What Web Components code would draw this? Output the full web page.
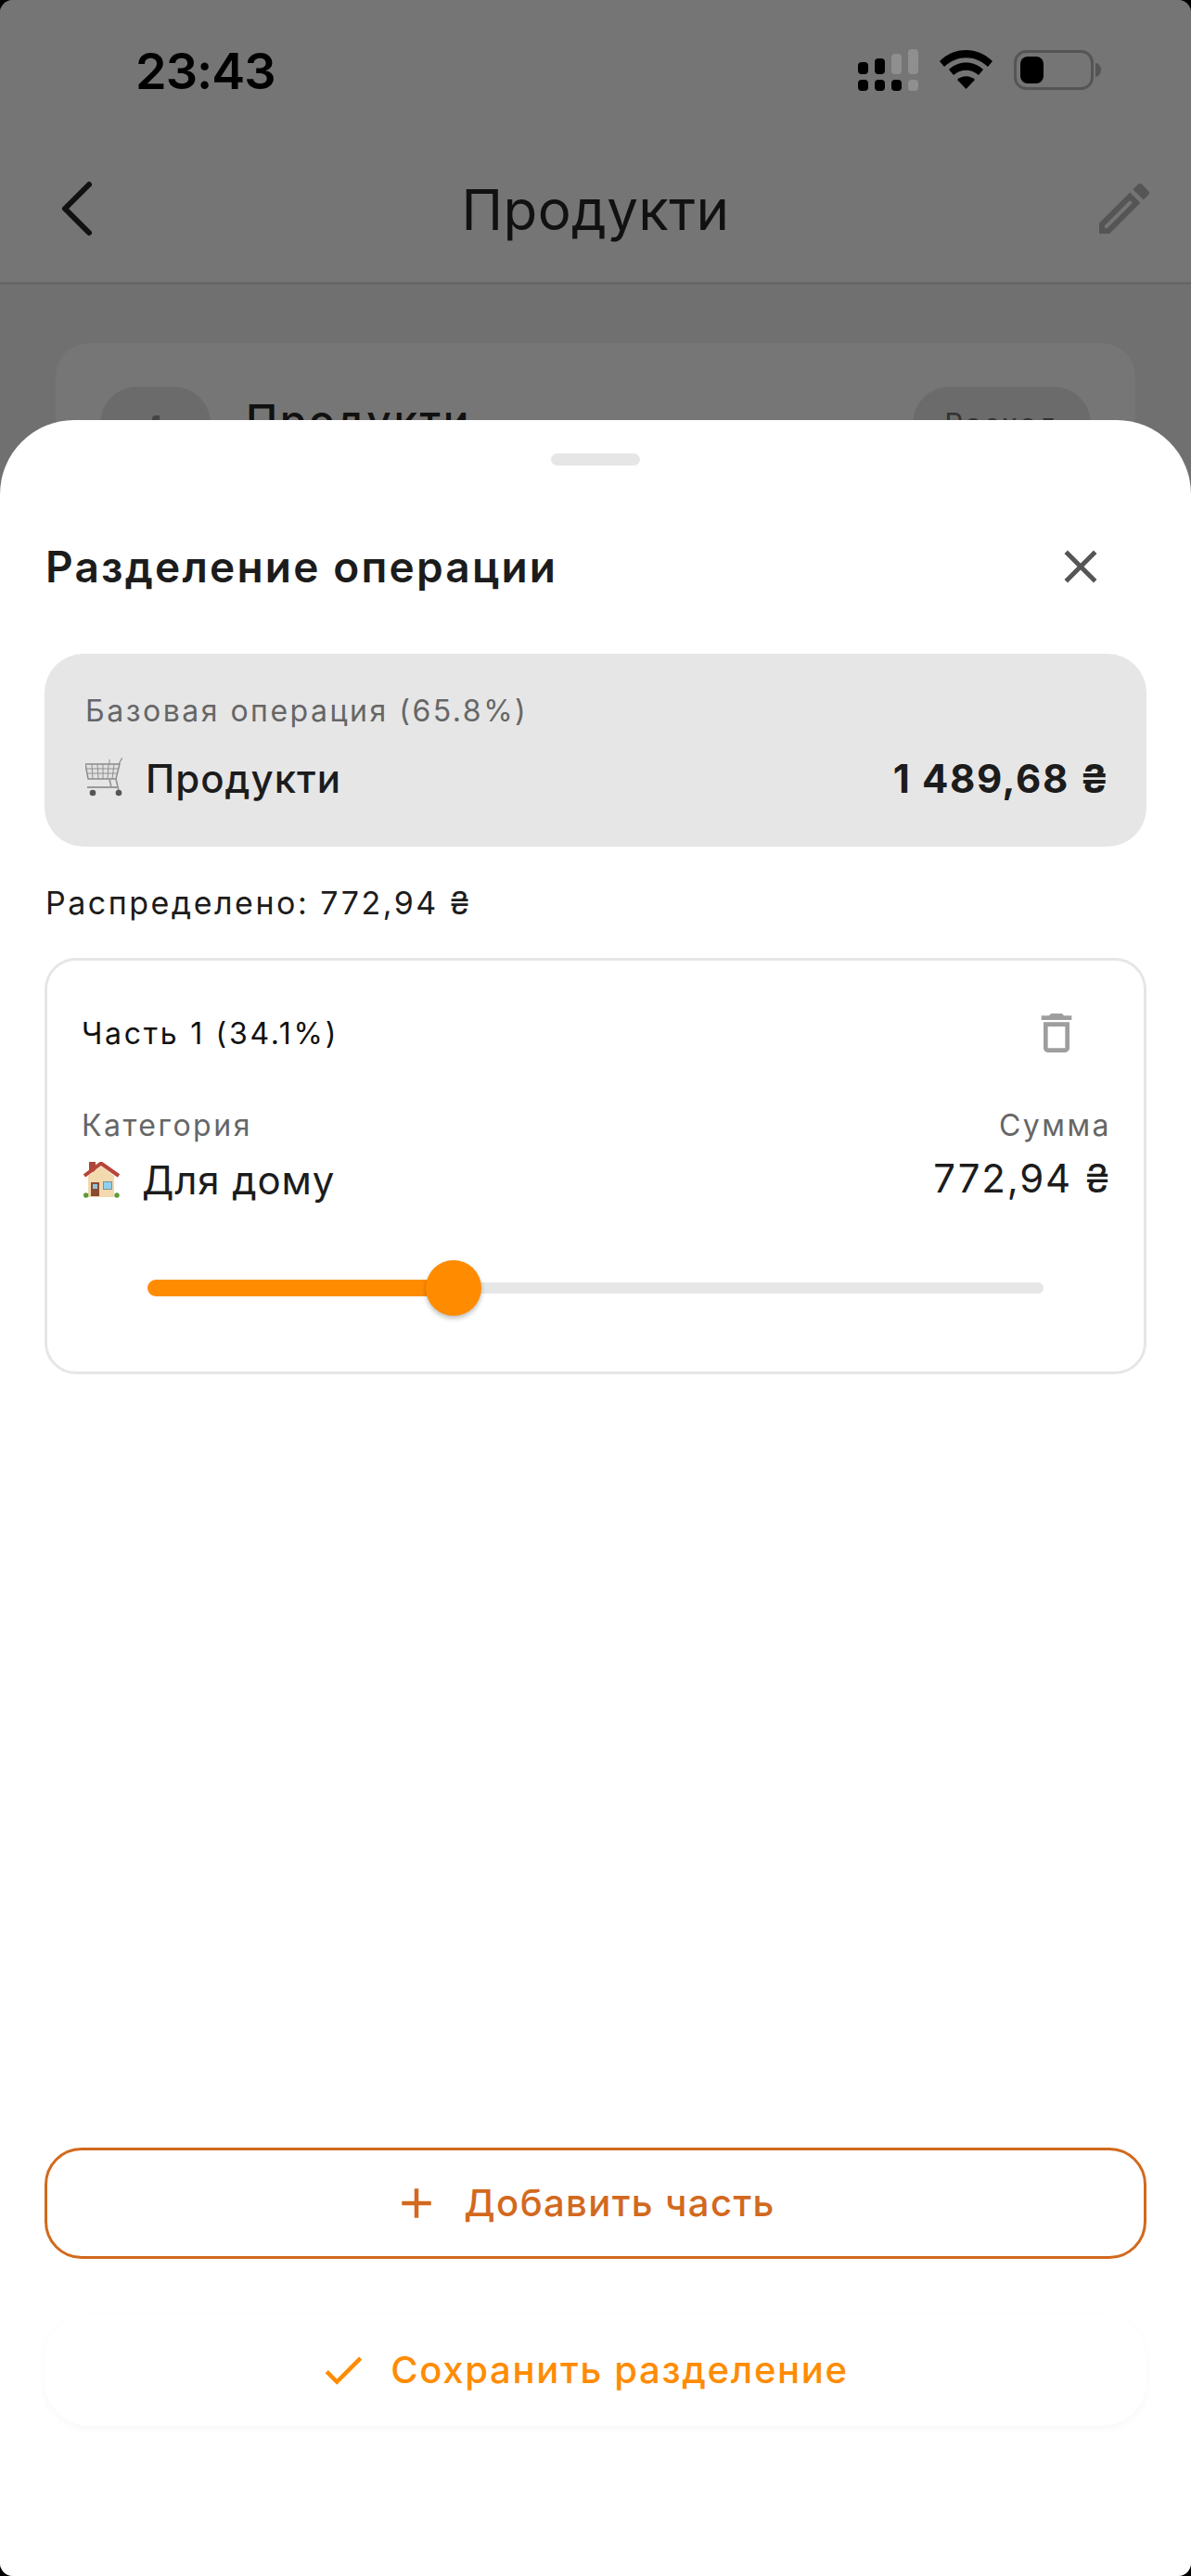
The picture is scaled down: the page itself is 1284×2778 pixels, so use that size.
<!DOCTYPE html>
<html lang="ru">
<head>
<meta charset="utf-8">
<title>Разделение операции</title>
<style>
  html { background: #000; }
  body { margin: 0; font-family: Inter, "Liberation Sans", sans-serif; }
  #phone {
    position: relative;
    width: 1284px;
    height: 2778px;
    overflow: hidden;
    border-radius: 14px;
    background: #707070;
  }
</style>
</head>
<body>
<div id="phone">
  <screen-behind></screen-behind>
  <split-sheet>
    <base-operation label="Базовая операция (65.8%)" name="Продукти" amount="1 489,68 ₴"></base-operation>
    <p slot="allocated" style="margin:0">Распределено: 772,94 ₴</p>
    <part-card slot="parts" title="Часть 1 (34.1%)" category="Для дому" amount="772,94 ₴" percent="34.13"></part-card>
    <sheet-button slot="actions" kind="outline" icon="add">Добавить часть</sheet-button>
    <sheet-button slot="actions" kind="flat" icon="check">Сохранить разделение</sheet-button>
  </split-sheet>
</div>

<template id="cart-icon">
  <svg width="40" height="42" viewBox="0 0 40 42" fill="none">
    <path d="M36 7L40 0" stroke="#9a9a9a" stroke-width="1.4"/>
    <path d="M26 7V2" stroke="#aaa" stroke-width="1.4"/>
    <path d="M0 7H37L33 23H3Z" fill="#e0e0e0" stroke="#8a8a8a" stroke-width="1.4"/>
    <path d="M1 12H36M2 17H35M7 7l1 16M13 7l1 16M19 7v16M25 7l-1 16M31 7l-2 16" stroke="#8a8a8a" stroke-width="0.9"/>
    <path d="M26 23l2 9M33 23l3 13M2 32H35" stroke="#9a9a9a" stroke-width="1.8"/>
    <circle cx="8" cy="38" r="3.300" fill="#555"/>
    <circle cx="36" cy="38" r="3.300" fill="#555"/>
  </svg>
</template>
<template id="house-icon">
  <svg width="40" height="40" viewBox="0 0 40 40">
    <rect x="6" y="0" width="7" height="11" fill="#a8483c"/>
    <path d="M5 15L19 4 33 15V38H5Z" fill="#f3d9ae"/>
    <path d="M1 15L19 1.500 38 15" fill="none" stroke="#b8443a" stroke-width="4"/>
    <rect x="8" y="22" width="9" height="15" fill="#8a4b32"/>
    <rect x="10" y="24" width="5" height="5" fill="#8fc4dd"/>
    <rect x="21" y="21" width="10" height="9" fill="#7f8f96"/>
    <rect x="22" y="22" width="8" height="7" fill="#8fd0ee"/>
    <circle cx="2.700" cy="36" r="2.700" fill="#5c9a35"/>
    <circle cx="36" cy="36" r="2.700" fill="#5c9a35"/>
  </svg>
</template>

<script>
  function render(host, html) {
    host.attachShadow({mode: 'open'}).innerHTML = html;
  }
  function glyph(id) {
    return document.getElementById(id).innerHTML;
  }

  class StatusBar extends HTMLElement {
    constructor() {
      super();
      render(this, `
        <style>
          :host { display: flex; height: 120px; padding: 53px 97px 0 146px; box-sizing: border-box; justify-content: space-between; align-items: flex-start; background: #757575; }
          .time { font: 600 54px/48px Inter, sans-serif; letter-spacing: -1px; color: #000; }
          .icons { display: flex; }
          svg { display: block; }
        </style>
        <span class="time">23:43</span>
        <div class="icons">
          <svg width="262" height="46" viewBox="0 0 262 46">
            <g fill="#000">
              <rect x="0" y="14" width="11" height="13" rx="4"/><rect x="18" y="10" width="11" height="17" rx="4"/>
              <rect x="0" y="33" width="11" height="12" rx="4"/><rect x="18" y="33" width="11" height="12" rx="4"/><rect x="36" y="33" width="11" height="12" rx="4"/>
            </g>
            <g fill="#8f8f8f">
              <rect x="36" y="5" width="11" height="22" rx="4"/><rect x="54" y="0" width="11" height="27" rx="4"/><rect x="54" y="33" width="11" height="12" rx="4"/>
            </g>
            <g fill="#000" transform="translate(88 1)">
              <path d="M0 12C16 -4 41 -4 57 12L52 18C38 5 19 5 5 18Z"/>
              <path d="M10 21C20 11 37 11 47 21L42 27C34 20 23 20 15 27Z"/>
              <path d="M19 32C24 27 33 27 38 32L28.500 42Z"/>
            </g>
            <rect x="169.500" y="2.500" width="83" height="40" rx="12" fill="none" stroke="#555" stroke-width="3"/>
            <rect x="175" y="8" width="25" height="29" rx="8" fill="#000"/>
            <path d="M256 15a6 7.500 0 0 1 0 15Z" fill="#555"/>
          </svg>
        </div>`);
    }
  }

  class AppBar extends HTMLElement {
    constructor() {
      super();
      render(this, `
        <style>
          :host { display: flex; height: 187px; padding: 0 36px 0 60px; box-sizing: border-box; align-items: flex-start; justify-content: space-between; background: #757575; border-bottom: 3px solid #666; }
          .back { margin-top: 74px; }
          .title { font: 400 60px/80px Inter, sans-serif; letter-spacing: 0.4px; color: #111; margin-top: 66px; margin-left: 4px; }
          .edit { margin-top: 69px; }
          svg { display: block; }
        </style>
        <svg class="back" width="44" height="62" viewBox="0 0 44 62" fill="none"><path d="M36 5L10 31 36 57" stroke="#111" stroke-width="6" stroke-linecap="round" stroke-linejoin="round"/></svg>
        <span class="title">Продукти</span>
        <svg class="edit" width="72" height="72" viewBox="0 0 24 24" fill="#555"><path d="M3 17.250V21h3.750L17.810 9.940l-3.750-3.750L3 17.250zM5.920 19H5v-.92l9.060-9.060.92.920L5.920 19zM20.710 5.630l-2.340-2.340c-.2-.2-.45-.29-.71-.29s-.51.1-.7.290l-1.830 1.830 3.750 3.750 1.830-1.830c.39-.39.39-1.020 0-1.410z"/></svg>`);
    }
  }

  class ScreenBehind extends HTMLElement {
    constructor() {
      super();
      render(this, `
        <style>
          :host { display: block; }
          .card { margin: 63px 60px 0; height: 400px; background: #767676; border-radius: 36px; padding: 47px 48px; box-sizing: border-box; display: flex; align-items: flex-start; }
          .chip { height: 80px; border-radius: 40px; background: #6b6b6b; display: flex; justify-content: center; padding-top: 20px; box-sizing: border-box; font: 400 31px/40px Inter, sans-serif; letter-spacing: 2.500px; color: #333; }
          .chip.icon { width: 119px; padding-top: 31px; }
          .mark { width: 8px; height: 8px; background: #444; border-radius: 4px 0 0 0; }
          .chip.kind { width: 192px; margin-left: auto; }
          .name { font: 500 46px/56px Inter, sans-serif; letter-spacing: 2.600px; color: #111; margin-left: 38px; margin-top: 8px; }
        </style>
        <status-bar></status-bar>
        <app-bar></app-bar>
        <div class="card">
          <div class="chip icon"><div class="mark"></div></div>
          <span class="name">Продукти</span>
          <div class="chip kind">Расход</div>
        </div>`);
    }
  }

  class SplitSheet extends HTMLElement {
    constructor() {
      super();
      render(this, `
        <style>
          :host { position: absolute; left: 0; right: 0; top: 453px; bottom: 0; background: #fff; border-radius: 80px 80px 0 0; display: flex; flex-direction: column; box-sizing: border-box; padding: 36px 48px 162px 48px; color: #1c1c1c; }
          .handle { width: 96px; height: 13px; border-radius: 7px; background: #e6e6e6; align-self: center; }
          header { display: flex; justify-content: space-between; align-items: center; margin-top: 78px; height: 64px; padding-left: 1px; }
          h2 { margin: -2px 0 0; font: 600 46px/64px Inter, sans-serif; letter-spacing: 2.200px; color: #1c1c1c; }
          svg { display: block; margin: -2px 41px 0 0; }
          .base { display: block; margin-top: 61px; }
          .allocated { margin-top: 39px; height: 44px; font: 400 34px/44px Inter, sans-serif; letter-spacing: 2.500px; color: #1c1c1c; padding-left: 1px; }
          .parts { margin-top: 37px; }
          .actions { margin-top: auto; display: flex; flex-direction: column; gap: 60px; }
        </style>
        <div class="handle"></div>
        <header>
          <h2>Разделение операции</h2>
          <svg width="60" height="60" viewBox="0 0 24 24" fill="#555"><path d="M19 6.410L17.590 5 12 10.590 6.410 5 5 6.410 10.590 12 5 17.590 6.410 19 12 13.410 17.590 19 19 17.590 13.410 12z"/></svg>
        </header>
        <div class="base"><slot></slot></div>
        <div class="allocated"><slot name="allocated"></slot></div>
        <div class="parts"><slot name="parts"></slot></div>
        <div class="actions"><slot name="actions"></slot></div>`);
    }
  }

  class BaseOperation extends HTMLElement {
    connectedCallback() {
      render(this, `
        <style>
          :host { display: block; height: 208px; box-sizing: border-box; background: #e6e6e6; border-radius: 42px; padding: 40px 39px 0 44px; }
          .label { font: 400 32px/44px Inter, sans-serif; letter-spacing: 2.500px; color: #666; }
          .row { display: flex; align-items: center; margin-top: 22px; height: 58px; }
          .cart { margin-top: -4px; width: 40px; }
          svg { display: block; }
          .name { font: 500 42px/58px Inter, sans-serif; letter-spacing: 1px; color: #1c1c1c; margin-left: 25px; }
          .amount { margin-left: auto; font: 700 42px/58px Inter, sans-serif; letter-spacing: 1.600px; color: #1c1c1c; }
        </style>
        <div class="label">${this.getAttribute('label')}</div>
        <div class="row">
          <div class="cart">${glyph('cart-icon')}</div>
          <span class="name">${this.getAttribute('name')}</span>
          <span class="amount">${this.getAttribute('amount')}</span>
        </div>`);
    }
  }

  class AmountSlider extends HTMLElement {
    connectedCallback() {
      const percent = this.getAttribute('percent');
      render(this, `
        <style>
          :host { display: block; height: 60px; position: relative; }
          .rail { position: absolute; left: 0; right: 0; top: 24px; height: 12px; border-radius: 6px; background: #e6e6e6; }
          .fill { position: absolute; left: 0; top: 21px; height: 18px; width: ${percent}%; border-radius: 9px 0 0 9px; background: #ff8c00; }
          .thumb { position: absolute; left: calc(${percent}% - 30px); top: 0; width: 60px; height: 60px; border-radius: 50%; background: #ff8c00; box-shadow: 0 3px 5px rgba(0,0,0,.25); }
        </style>
        <div class="rail"></div>
        <div class="fill"></div>
        <div class="thumb"></div>`);
    }
  }

  class PartCard extends HTMLElement {
    connectedCallback() {
      render(this, `
        <style>
          :host { display: block; height: 449px; box-sizing: border-box; border: 3px solid #e6e6e6; border-radius: 34px; padding: 51px 35px 0 37px; }
          .top, .labels, .values { display: flex; justify-content: space-between; }
          .top { align-items: center; height: 56px; margin-top: -1px; }
          .title { font: 400 32px/44px Inter, sans-serif; letter-spacing: 2.700px; color: #111; margin-top: 2px; }
          .trash { margin-right: 31px; }
          svg { display: block; }
          .labels { margin-top: 50px; font: 400 32px/44px Inter, sans-serif; letter-spacing: 2.500px; color: #666; }
          .values { margin-top: 10px; height: 54px; font: 400 42px/54px Inter, sans-serif; color: #1c1c1c; }
          .cat { display: flex; align-items: center; letter-spacing: 0.900px; padding-left: 2px; }
          .cat span { margin-left: 23px; }
          .sum { margin-top: -2px; letter-spacing: 1.800px; }
          amount-slider { margin: 59px 73px 0 71px; }
        </style>
        <div class="top">
          <span class="title">${this.getAttribute('title')}</span>
          <svg class="trash" width="56" height="56" viewBox="0 0 24 24" fill="#9e9e9e"><path d="M6 19c0 1.100.9 2 2 2h8c1.100 0 2-.9 2-2V7H6v12zM8 9h8v10H8V9zm7.500-5l-1-1h-5l-1 1H5v2h14V4h-3.500z"/></svg>
        </div>
        <div class="labels"><span>Категория</span><span>Сумма</span></div>
        <div class="values">
          <div class="cat">${glyph('house-icon')}<span>${this.getAttribute('category')}</span></div>
          <div class="sum">${this.getAttribute('amount')}</div>
        </div>
        <amount-slider percent="${this.getAttribute('percent')}"></amount-slider>`);
    }
  }

  const SHEET_ICONS = {
    add: 'M19 13h-6v6h-2v-6H5v-2h6V5h2v6h6v2z',
    check: 'M9 16.170L4.830 12l-1.420 1.410L9 19 21 7l-1.410-1.410z'
  };

  class SheetButton extends HTMLElement {
    connectedCallback() {
      const outline = this.getAttribute('kind') === 'outline';
      const color = outline ? '#d2691e' : '#ff8c00';
      render(this, `
        <style>
          :host { display: flex; align-items: center; justify-content: center; gap: 24px; box-sizing: border-box; height: 120px; padding-right: 26px; color: ${color}; font: 500 40px/54px Inter, sans-serif; letter-spacing: ${outline ? 1.4 : 1.7}px; background: #fff; }
          :host([kind="outline"]) { border: 3px solid #d2691e; border-radius: 40px; }
          :host([kind="flat"]) { border-radius: 48px; box-shadow: 0 3px 10px rgba(0,0,0,.035); }
          svg { display: block; fill: ${color}; }
        </style>
        <svg width="54" height="54" viewBox="0 0 24 24"><path d="${SHEET_ICONS[this.getAttribute('icon')]}"/></svg>
        <slot></slot>`);
    }
  }

  customElements.define('status-bar', StatusBar);
  customElements.define('app-bar', AppBar);
  customElements.define('screen-behind', ScreenBehind);
  customElements.define('split-sheet', SplitSheet);
  customElements.define('base-operation', BaseOperation);
  customElements.define('amount-slider', AmountSlider);
  customElements.define('part-card', PartCard);
  customElements.define('sheet-button', SheetButton);
</script>
</body>
</html>
